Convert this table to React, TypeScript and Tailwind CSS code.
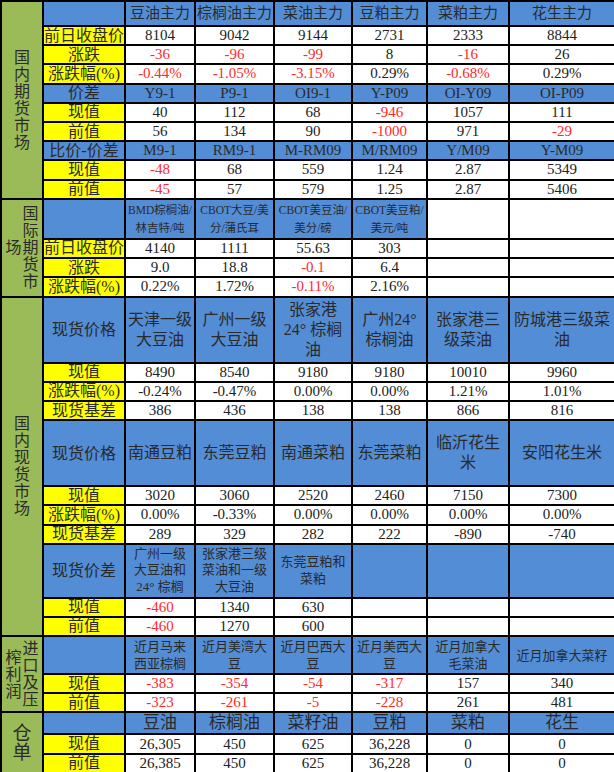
import React from 'react';

type V = string | [string, 'r'];

const FONT = '"Liberation Serif", "Noto Sans CJK SC", serif';

const td = 'border-2 border-black text-center align-middle p-0';

function Label({ text, blue = false }: { text: string; blue?: boolean }) {
    return (
        <td className={`${td} leading-none ${blue ? 'bg-[#538dd5]' : 'bg-[#ffff00]'} text-[16px] text-[#2b2b2b]`}>
            {text}
        </td>
    );
}

function Val({ v }: { v: V }) {
    const red = Array.isArray(v);
    const t = red ? v[0] : v;
    return <td className={`${td} leading-none bg-white text-[15px] ${red ? 'text-[#ff2a2a]' : 'text-[#222]'}`}>{t}</td>;
}

function Head({ lines, size = 'text-[15px] leading-[17px]', empty = false }: { lines?: string[]; size?: string; empty?: boolean }) {
    return (
        <td className={`${td} ${empty ? 'bg-white' : 'bg-[#538dd5]'} ${size} text-[#2a2a2a]`}>
            {lines?.map((l, i) => (
                <div key={i}>{l}</div>
            ))}
        </td>
    );
}

function ValueRow({ label, vals, h, blank = 0 }: { label: string; vals: V[]; h: string; blank?: number }) {
    return (
        <tr className={h}>
            <Label text={label} />
            {vals.map((v, i) => (
                <Val key={i} v={v} />
            ))}
            {Array.from({ length: blank }).map((_, i) => (
                <td key={'b' + i} className={`${td} bg-white`} />
            ))}
        </tr>
    );
}

// vertical caption in the green column; first column sits on the right
function Side({ cols, rows, size = 'text-[16px] leading-[17px]' }: { cols: string[]; rows: number; size?: string }) {
    return (
        <td rowSpan={rows} className={`${td} bg-[#9bbb59] text-[#2b2b2b] ${size}`}>
            <div className="flex flex-row-reverse items-center justify-center gap-[1px]">
                {cols.map((c, i) => (
                    <div key={i} className="flex flex-col items-center">
                        {c.split('').map((ch, j) => (
                            <span key={j} className="block">{ch}</span>
                        ))}
                    </div>
                ))}
            </div>
        </td>
    );
}

export default function App() {
    const r = (s: string): V => [s, 'r'];
    const row = 'h-[19.2px]';

    return (
        <div className="bg-white w-[614px] h-[772px] overflow-hidden" style={{ fontFamily: FONT }}>
            <table className="table-fixed border-collapse w-[614px]">
                <colgroup>
                    <col className="w-[42px]" />
                    <col className="w-[82px]" />
                    <col className="w-[70px]" />
                    <col className="w-[79px]" />
                    <col className="w-[78px]" />
                    <col className="w-[75px]" />
                    <col className="w-[82px]" />
                    <col className="w-[106px]" />
                </colgroup>
                <tbody>
                    {/* 国内期货市场 */}
                    <tr className="h-[25px]">
                        <Side cols={['国内期货市场']} rows={10} />
                        <Head />
                        {['豆油主力', '棕榈油主力', '菜油主力', '豆粕主力', '菜粕主力', '花生主力'].map((h) => (
                            <Head key={h} lines={[h]} />
                        ))}
                    </tr>
                    <ValueRow h={row} label="前日收盘价" vals={['8104', '9042', '9144', '2731', '2333', '8844']} />
                    <ValueRow h={row} label="涨跌" vals={[r('-36'), r('-96'), r('-99'), '8', r('-16'), '26']} />
                    <ValueRow h={row} label="涨跌幅(%)" vals={[r('-0.44%'), r('-1.05%'), r('-3.15%'), '0.29%', r('-0.68%'), '0.29%']} />
                    <tr className={row}>
                        <Label text="价差" blue />
                        {['Y9-1', 'P9-1', 'OI9-1', 'Y-P09', 'OI-Y09', 'OI-P09'].map((h) => (
                            <Head key={h} lines={[h]} />
                        ))}
                    </tr>
                    <ValueRow h={row} label="现值" vals={['40', '112', '68', r('-946'), '1057', '111']} />
                    <ValueRow h={row} label="前值" vals={['56', '134', '90', r('-1000'), '971', r('-29')]} />
                    <tr className={row}>
                        <Label text="比价-价差" blue />
                        {['M9-1', 'RM9-1', 'M-RM09', 'M/RM09', 'Y/M09', 'Y-M09'].map((h) => (
                            <Head key={h} lines={[h]} />
                        ))}
                    </tr>
                    <ValueRow h={row} label="现值" vals={[r('-48'), '68', '559', '1.24', '2.87', '5349']} />
                    <ValueRow h={row} label="前值" vals={[r('-45'), '57', '579', '1.25', '2.87', '5406']} />

                    {/* 国际期货市场 */}
                    <tr className="h-[40px]">
                        <Side cols={['国际期货市', '场']} rows={4} />
                        <Head />
                        {[
                            ['BMD棕榈油/', '林吉特/吨'],
                            ['CBOT大豆/美', '分/蒲氏耳'],
                            ['CBOT美豆油/', '美分/磅'],
                            ['CBOT美豆粕/', '美元/吨'],
                        ].map((l) => (
                            <Head key={l[0]} lines={l} size="text-[11.5px] leading-[18px]" />
                        ))}
                        <Head empty />
                        <Head empty />
                    </tr>
                    <ValueRow h="h-[19.3px]" label="前日收盘价" vals={['4140', '1111', '55.63', '303']} blank={2} />
                    <ValueRow h="h-[19.3px]" label="涨跌" vals={['9.0', '18.8', r('-0.1'), '6.4']} blank={2} />
                    <ValueRow h="h-[19.3px]" label="涨跌幅(%)" vals={['0.22%', '1.72%', r('-0.11%'), '2.16%']} blank={2} />

                    {/* 国内现货市场 */}
                    <tr className="h-[66px]">
                        <Side cols={['国内现货市场']} rows={11} />
                        <Head lines={['现货价格']} size="text-[16px] leading-[19px]" />
                        {[
                            ['天津一级', '大豆油'],
                            ['广州一级', '大豆油'],
                            ['张家港', '24° 棕榈', '油'],
                            ['广州24°', '棕榈油'],
                            ['张家港三', '级菜油'],
                            ['防城港三级菜', '油'],
                        ].map((l) => (
                            <Head key={l[0] + l[1]} lines={l} size="text-[16px] leading-[20px]" />
                        ))}
                    </tr>
                    <ValueRow h={row} label="现值" vals={['8490', '8540', '9180', '9180', '10010', '9960']} />
                    <ValueRow h={row} label="涨跌幅(%)" vals={['-0.24%', '-0.47%', '0.00%', '0.00%', '1.21%', '1.01%']} />
                    <ValueRow h={row} label="现货基差" vals={['386', '436', '138', '138', '866', '816']} />
                    <tr className="h-[66px]">
                        <Head lines={['现货价格']} size="text-[16px] leading-[19px]" />
                        {[['南通豆粕'], ['东莞豆粕'], ['南通菜粕'], ['东莞菜粕'], ['临沂花生', '米'], ['安阳花生米']].map((l) => (
                            <Head key={l[0]} lines={l} size="text-[16px] leading-[20px]" />
                        ))}
                    </tr>
                    <ValueRow h={row} label="现值" vals={['3020', '3060', '2520', '2460', '7150', '7300']} />
                    <ValueRow h={row} label="涨跌幅(%)" vals={['0.00%', '-0.33%', '0.00%', '0.00%', '0.00%', '0.00%']} />
                    <ValueRow h={row} label="现货基差" vals={['289', '329', '282', '222', '-890', '-740']} />
                    <tr className="h-[54px]">
                        <Head lines={['现货价差']} size="text-[16px] leading-[19px]" />
                        {[
                            ['广州一级', '大豆油和', '24° 棕榈'],
                            ['张家港三级', '菜油和一级', '大豆油'],
                            ['东莞豆粕和', '菜粕'],
                        ].map((l) => (
                            <Head key={l[0]} lines={l} size="text-[13px] leading-[16.5px]" />
                        ))}
                        <Head />
                        <Head />
                        <Head />
                    </tr>
                    <ValueRow h={row} label="现值" vals={[r('-460'), '1340', '630']} blank={3} />
                    <ValueRow h={row} label="前值" vals={[r('-460'), '1270', '600']} blank={3} />

                    {/* 进口及压榨利润 */}
                    <tr className="h-[38px]">
                        <Side cols={['进口及压', '榨利润']} rows={3} />
                        <Head />
                        <td className={`${td} bg-[#538dd5] text-[13px] leading-[17px] text-[#2a2a2a]`}>
                            <div className="h-[36px] overflow-hidden pt-[1px]">
                                <div>近月马来</div>
                                <div>西亚棕榈</div>
                                <div>油</div>
                            </div>
                        </td>
                        {[
                            ['近月美湾大', '豆'],
                            ['近月巴西大', '豆'],
                            ['近月美西大', '豆'],
                            ['近月加拿大', '毛菜油'],
                            ['近月加拿大菜籽'],
                        ].map((l) => (
                            <Head key={l.join('')} lines={l} size="text-[13px] leading-[17px]" />
                        ))}
                    </tr>
                    <ValueRow h={row} label="现值" vals={[r('-383'), r('-354'), r('-54'), r('-317'), '157', '340']} />
                    <ValueRow h={row} label="前值" vals={[r('-323'), r('-261'), r('-5'), r('-228'), '261', '481']} />

                    {/* 仓单 */}
                    <tr className="h-[22px]">
                        <Side cols={['仓单']} rows={3} size="text-[19px] leading-[19px]" />
                        <Head />
                        {['豆油', '棕榈油', '菜籽油', '豆粕', '菜粕', '花生'].map((h) => (
                            <Head key={h} lines={[h]} size="text-[17px] leading-[18px]" />
                        ))}
                    </tr>
                    <ValueRow h={row} label="现值" vals={['26,305', '450', '625', '36,228', '0', '0']} />
                    <ValueRow h={row} label="前值" vals={['26,385', '450', '625', '36,228', '0', '0']} />
                </tbody>
            </table>
        </div>
    );
}
